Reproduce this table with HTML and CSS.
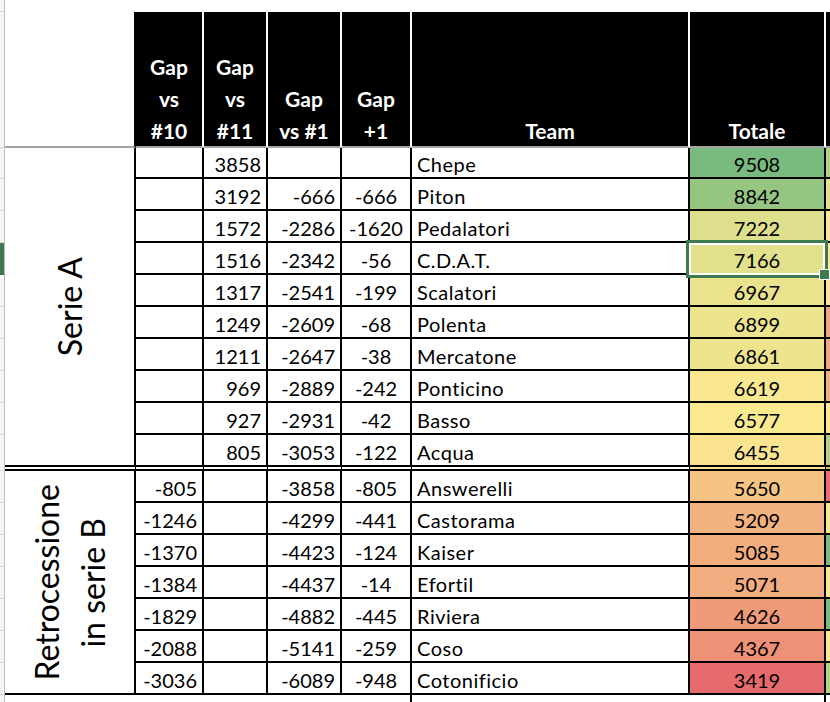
FILE: index.html
```html
<!DOCTYPE html>
<html lang="it">
<head>
<meta charset="utf-8">
<title>Classifica</title>
<link rel="stylesheet" href="styles.css">
</head>
<body>
<div class="sheet">
  <!-- top sliver row -->
  <div class="s"></div>
  <div class="top"></div>

  <!-- header row -->
  <div class="s"></div>
  <div class="hlab"></div>
  <div class="h"><span>Gap<br>vs<br>#10</span></div>
  <div class="h"><span>Gap<br>vs<br>#11</span></div>
  <div class="h"><span>Gap<br>vs #1</span></div>
  <div class="h"><span>Gap<br>+1</span></div>
  <div class="h"><span>Team</span></div>
  <div class="h"><span>Totale</span></div>
  <div class="h hx"></div>

  <!-- Serie A -->
  <div class="s"></div>
  <div class="lab lab-a dbl"><span>Serie A</span></div>
  <div class="c r"></div><div class="c r">3858</div><div class="c r"></div><div class="c m"></div><div class="c t">Chepe</div><div class="c m" style="background:rgb(121,186,126)">9508</div><div class="x" style="background:#afd380"></div>

  <div class="s"></div>
  <div class="c r"></div><div class="c r">3192</div><div class="c r">-666</div><div class="c m">-666</div><div class="c t">Piton</div><div class="c m" style="background:rgb(150,197,130)">8842</div><div class="x" style="background:#e4e38b"></div>

  <div class="s"></div>
  <div class="c r"></div><div class="c r">1572</div><div class="c r">-2286</div><div class="c m">-1620</div><div class="c t">Pedalatori</div><div class="c m" style="background:rgb(222,223,140)">7222</div><div class="x" style="background:#fbe98f"></div>

  <div class="s sel"></div>
  <div class="c r"></div><div class="c r">1516</div><div class="c r">-2342</div><div class="c m">-56</div><div class="c t">C.D.A.T.</div><div class="c m cur" style="background:rgb(225,224,140)">7166<i class="selbox"></i><i class="handle"></i></div><div class="x" style="background:#fbe98f"></div>

  <div class="s"></div>
  <div class="c r"></div><div class="c r">1317</div><div class="c r">-2541</div><div class="c m">-199</div><div class="c t">Scalatori</div><div class="c m" style="background:rgb(234,227,142)">6967</div><div class="x" style="background:#fbe98f"></div>

  <div class="s"></div>
  <div class="c r"></div><div class="c r">1249</div><div class="c r">-2609</div><div class="c m">-68</div><div class="c t">Polenta</div><div class="c m" style="background:rgb(237,228,142)">6899</div><div class="x" style="background:#f0a77c"></div>

  <div class="s"></div>
  <div class="c r"></div><div class="c r">1211</div><div class="c r">-2647</div><div class="c m">-38</div><div class="c t">Mercatone</div><div class="c m" style="background:rgb(238,228,142)">6861</div><div class="x" style="background:#f0a77c"></div>

  <div class="s"></div>
  <div class="c r"></div><div class="c r">969</div><div class="c r">-2889</div><div class="c m">-242</div><div class="c t">Ponticino</div><div class="c m" style="background:rgb(249,232,144)">6619</div><div class="x" style="background:#f2b07c"></div>

  <div class="s"></div>
  <div class="c r"></div><div class="c r">927</div><div class="c r">-2931</div><div class="c m">-42</div><div class="c t">Basso</div><div class="c m" style="background:rgb(251,233,144)">6577</div><div class="x" style="background:#fbe98f"></div>

  <div class="s"></div>
  <div class="c r dbl"></div><div class="c r dbl">805</div><div class="c r dbl">-3053</div><div class="c m dbl">-122</div><div class="c t dbl">Acqua</div><div class="c m dbl" style="background:rgb(250,228,143)">6455</div><div class="x dbl" style="background:#b5d17f"></div>

  <!-- Retrocessione -->
  <div class="s"></div>
  <div class="lab lab-b"><span>Retrocessione<br>in serie B</span></div>
  <div class="c r">-805</div><div class="c r"></div><div class="c r">-3858</div><div class="c m">-805</div><div class="c t">Answerelli</div><div class="c m" style="background:rgb(245,196,133)">5650</div><div class="x" style="background:#e8706e"></div>

  <div class="s"></div>
  <div class="c r">-1246</div><div class="c r"></div><div class="c r">-4299</div><div class="c m">-441</div><div class="c t">Castorama</div><div class="c m" style="background:rgb(242,178,128)">5209</div><div class="x" style="background:#fbe98f"></div>

  <div class="s"></div>
  <div class="c r">-1370</div><div class="c r"></div><div class="c r">-4423</div><div class="c m">-124</div><div class="c t">Kaiser</div><div class="c m" style="background:rgb(242,173,127)">5085</div><div class="x" style="background:#7cbb7d"></div>

  <div class="s"></div>
  <div class="c r">-1384</div><div class="c r"></div><div class="c r">-4437</div><div class="c m">-14</div><div class="c t">Efortil</div><div class="c m" style="background:rgb(241,173,127)">5071</div><div class="x" style="background:#fbe98f"></div>

  <div class="s"></div>
  <div class="c r">-1829</div><div class="c r"></div><div class="c r">-4882</div><div class="c m">-445</div><div class="c t">Riviera</div><div class="c m" style="background:rgb(239,155,122)">4626</div><div class="x" style="background:#7cbb7d"></div>

  <div class="s"></div>
  <div class="c r">-2088</div><div class="c r"></div><div class="c r">-5141</div><div class="c m">-259</div><div class="c t">Coso</div><div class="c m" style="background:rgb(237,145,119)">4367</div><div class="x" style="background:#fbe98f"></div>

  <div class="s"></div>
  <div class="c r">-3036</div><div class="c r"></div><div class="c r">-6089</div><div class="c m">-948</div><div class="c t">Cotonificio</div><div class="c m" style="background:rgb(231,107,108)">3419</div><div class="x" style="background:#b8d37f"></div>

  <!-- trailing row -->
  <div class="s"></div>
  <div class="tail-left"></div>
  <div class="tail-team"></div>
  <div class="tail-tot"></div>
  <div class="tail-x"></div>
</div>
</body>
</html>
```
FILE: styles.css
```css
* {
  box-sizing: border-box;
  margin: 0;
  padding: 0;
}

html,
body {
  width: 830px;
  height: 702px;
  overflow: hidden;
  background: #fff;
}

body {
  font-family: Lato, "Open Sans", sans-serif;
  font-size: 20px;
  color: #000;
}

.sheet {
  display: grid;
  grid-template-columns: 5px 131px 68px 64px 74px 70px 278px 136px 1fr;
  grid-template-rows: 12px 136px 31px repeat(8, 32px) 36px repeat(7, 32px) 20px;
}

/* row-header strip at the far left */
.s {
  background: #f5f5f5;
  border-right: 1px solid #bdbdbd;
  border-bottom: 1px solid #d6d6d6;
}

.s.sel {
  background: #3d7a4f;
  border-bottom-color: #3d7a4f;
}

.top {
  grid-column: 2 / -1;
}

/* header */
.hlab {
  border-right: 2px solid #000;
  border-bottom: 2px solid #a3a3a3;
}

.h {
  background: #000;
  color: #fff;
  font-weight: 700;
  font-size: 21px;
  line-height: 32px;
  text-align: center;
  border-right: 2px solid #fff;
  border-bottom: 2px solid #a3a3a3;
  display: flex;
  align-items: flex-end;
  justify-content: center;
}

.h span {
  position: relative;
  top: 1px;
}

.h.hx {
  border-right: 0;
}

/* data cells */
.c {
  border-right: 2px solid #000;
  border-bottom: 2px solid #000;
  display: flex;
  align-items: flex-end;
  line-height: 26px;
  white-space: nowrap;
}

.c.r {
  justify-content: flex-end;
  padding-right: 5px;
}

.c.m {
  justify-content: center;
}

.c.t {
  justify-content: flex-start;
  padding-left: 5px;
  letter-spacing: 0.5px;
}

.x {
  border-bottom: 2px solid #000;
}

.dbl {
  border-bottom: 6px double #000;
}

/* merged group labels */
.lab {
  border-right: 2px solid #000;
  border-bottom: 2px solid #000;
  display: flex;
  align-items: center;
  justify-content: center;
}

.lab.dbl {
  border-bottom: 6px double #000;
}

.lab-a {
  grid-row: span 10;
}

.lab-b {
  grid-row: span 7;
}

.lab span {
  writing-mode: vertical-rl;
  transform: rotate(180deg);
  font-size: 32px;
  line-height: 46px;
  text-align: center;
  white-space: nowrap;
}

/* selected cell */
.cur {
  position: relative;
}

.selbox {
  position: absolute;
  left: -4px;
  top: -3px;
  right: -4px;
  bottom: -5px;
  border: 3px solid #3d7a4f;
  box-shadow: inset 0 0 0 2px #fff;
}

.handle {
  position: absolute;
  left: 129px;
  top: 26px;
  width: 11px;
  height: 11px;
  background: #3d7a4f;
  border: 1.5px solid #fff;
}

/* trailing partial row */
.tail-left {
  grid-column: 2 / 7;
  border-right: 2px solid #000;
}

.tail-tot {
  border-right: 2px solid #000;
}
```
